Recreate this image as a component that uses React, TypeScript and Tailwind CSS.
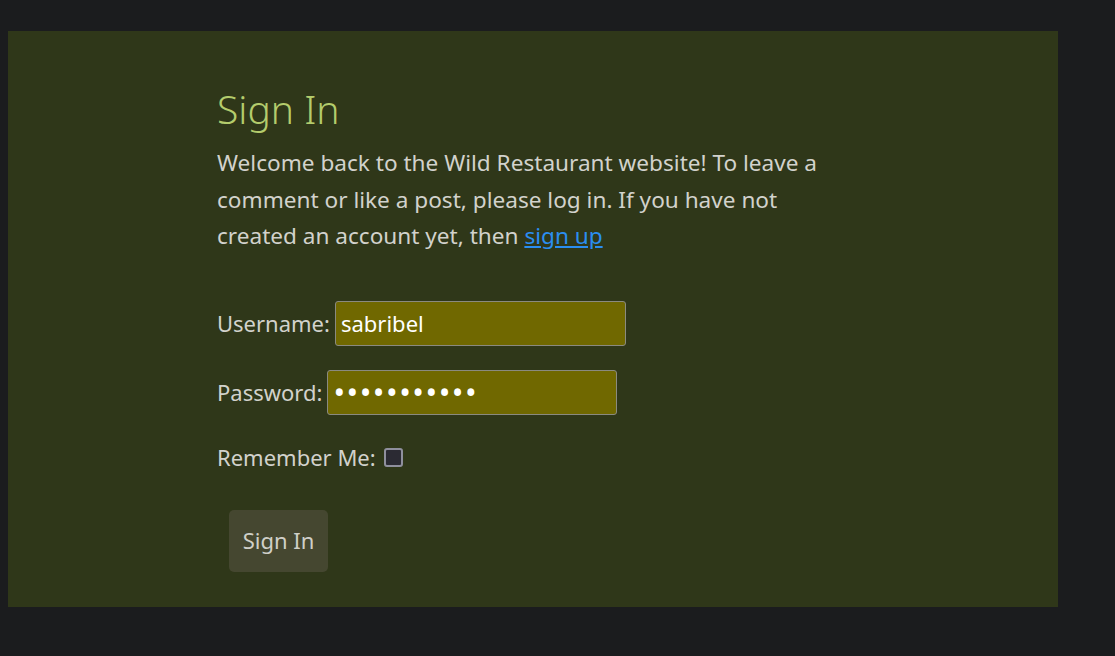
import React from "react";

export default function App() {
  return (
    <div className="min-h-[656px] w-full bg-[#1b1c1e] pt-[31px] pl-[8px] font-['Noto_Sans',sans-serif]">
      <div className="h-[576px] w-[1050px] bg-[#2f3719] pl-[209px] pt-[58px]">
        <h1 className="text-[39px] font-light leading-none text-[#b4cc6c]">Sign In</h1>
        <p className="mt-[17px] w-[625px] text-[22.6px] leading-[36.5px] text-[#d2d2cc]">
          Welcome back to the Wild Restaurant website! To leave a comment or like a post, please log in. If you have
          not created an account yet, then{" "}
          <a href="#" className="text-[#2b8ef0] underline">
            sign up
          </a>
        </p>
        <form className="mt-[46px] flex flex-col text-[22px] text-[#d2d2cc]">
          <label className="flex items-center gap-[5px]">
            Username:
            <input
              type="text"
              defaultValue="sabribel"
              className="h-[45px] w-[291px] rounded-[3px] border border-[#8a8a80] bg-[#706800] px-[5px] text-[22px] text-white outline-none"
            />
          </label>
          <label className="mt-[24px] flex items-center gap-[5px]">
            Password:
            <input
              type="password"
              defaultValue="sabribelpas"
              className="h-[45px] w-[290px] rounded-[3px] border border-[#8a8a80] bg-[#706800] px-[5px] text-[31px] tracking-[1.5px] text-white outline-none"
            />
          </label>
          <label className="mt-[26px] flex items-center gap-[8px]">
            Remember Me:
            <span className="inline-block h-[19px] w-[19px] rounded-[3px] border-[2px] border-[#8f8f9d] bg-[#2b2a33]" />
          </label>
          <div className="mt-[36px] pl-[12px]">
            <button type="button" className="h-[62px] w-[99px] rounded-[5px] bg-[#454730] text-[22px] text-[#cfcfc8]">
              Sign In
            </button>
          </div>
        </form>
      </div>
    </div>
  );
}
